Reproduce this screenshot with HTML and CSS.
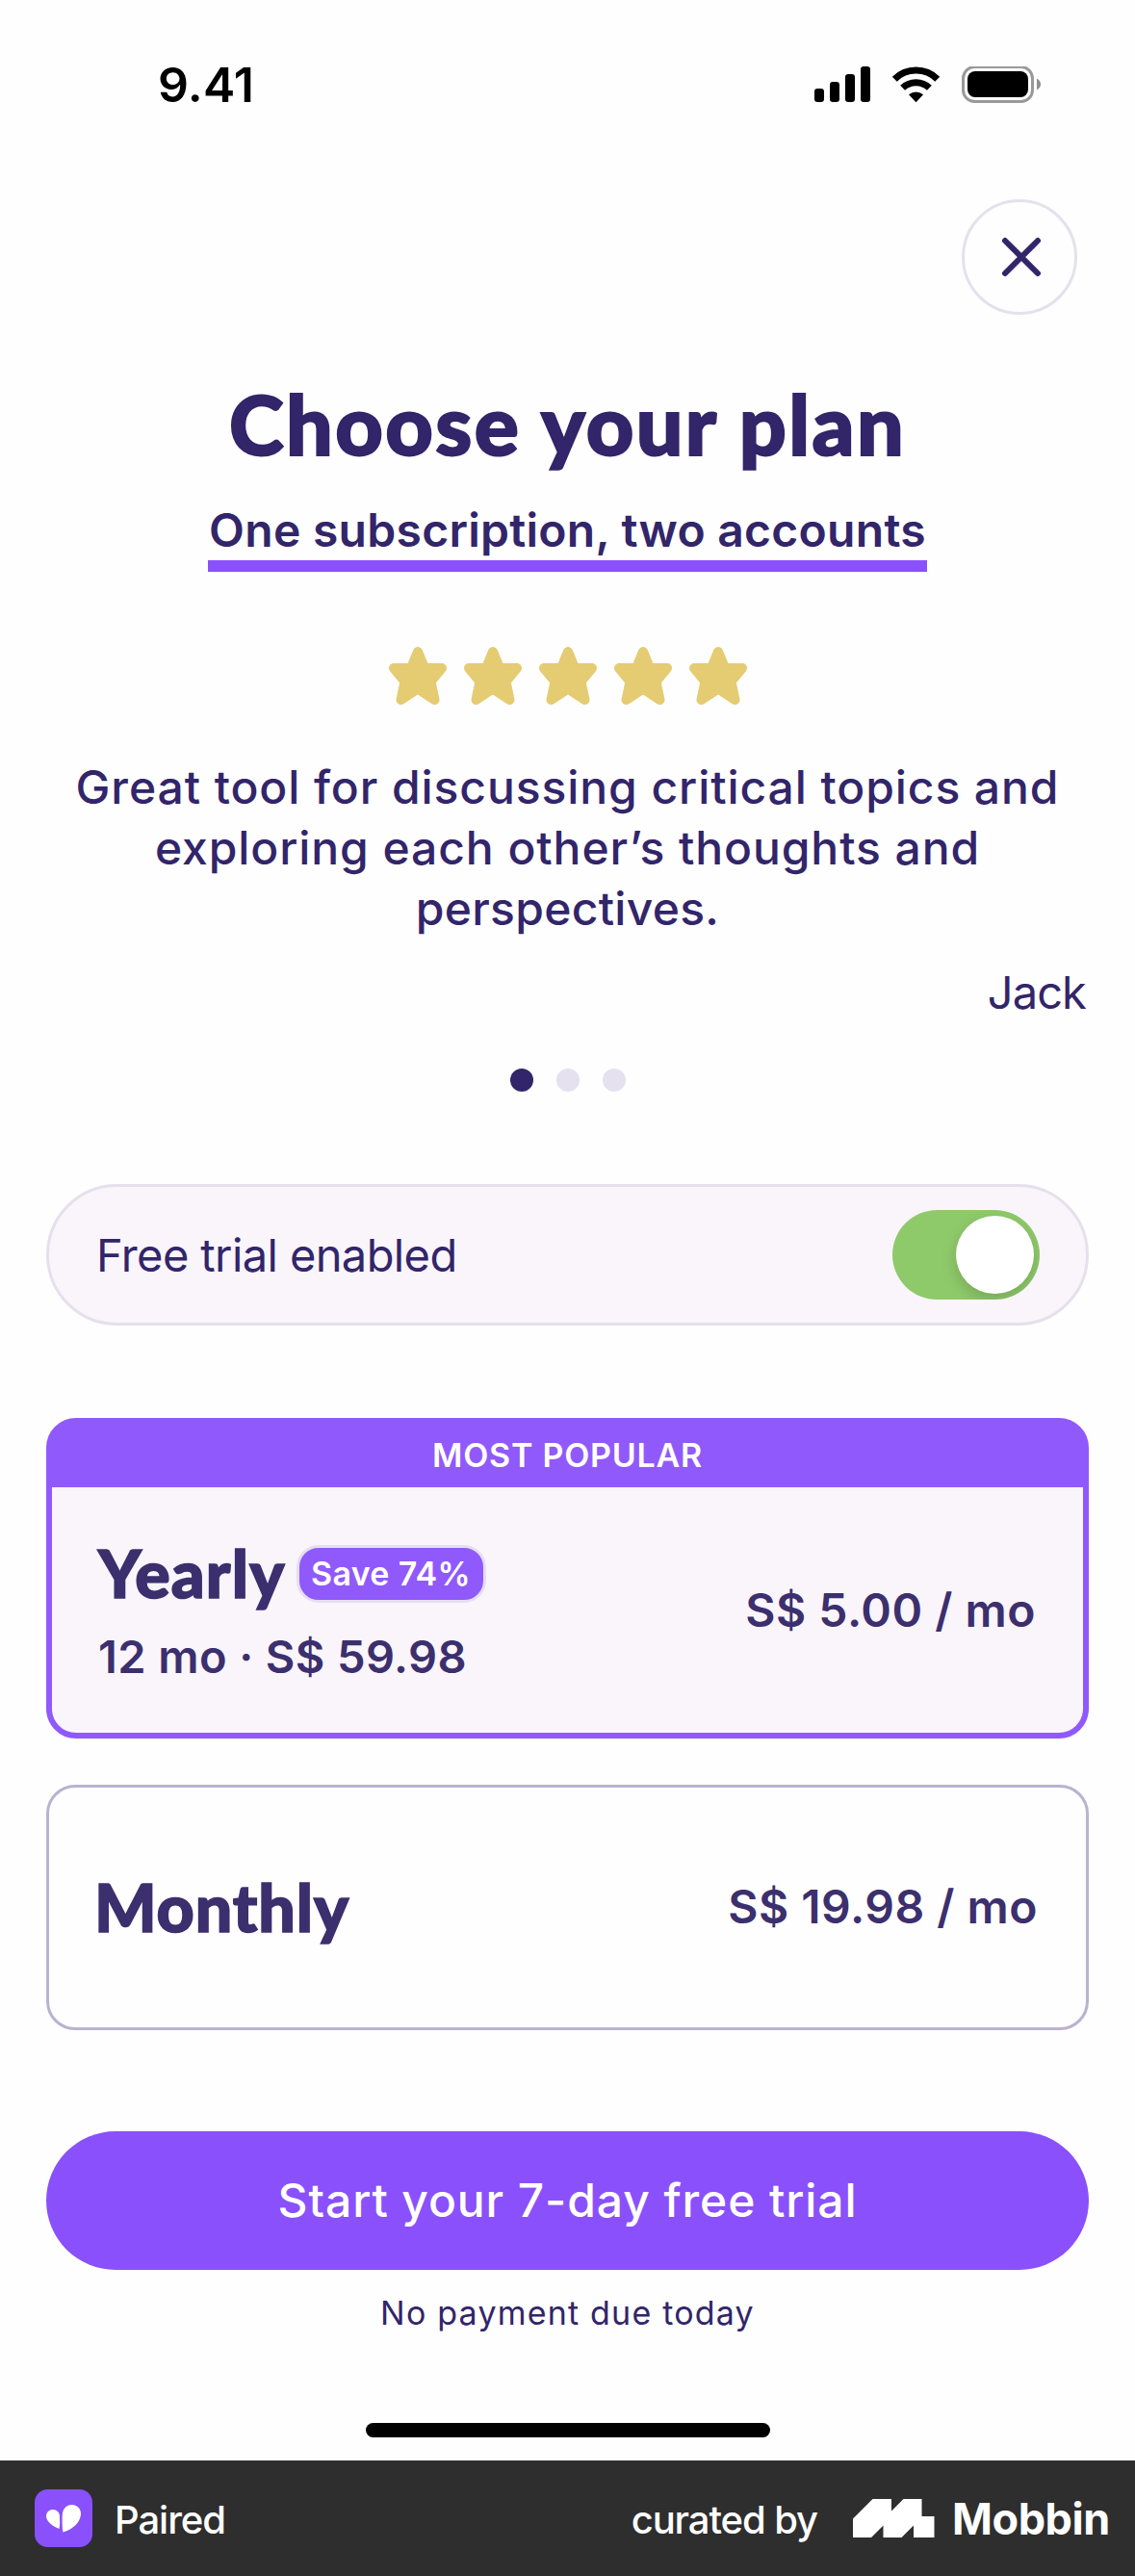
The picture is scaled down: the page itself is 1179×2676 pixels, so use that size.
FILE: index.html
```html
<!DOCTYPE html>
<html lang="en">
<head>
<meta charset="utf-8">
<title>Choose your plan</title>
<link rel="stylesheet" href="styles.css">
</head>
<body>
<div class="screen">
  <header class="status">
    <span class="time">9.41</span>
    <svg class="status-icons" width="236" height="40" viewBox="0 0 236 40">
      <rect x="0" y="23" width="10" height="14" rx="3.2"/>
      <rect x="16" y="16" width="10" height="21" rx="3.2"/>
      <rect x="32" y="8" width="10" height="29" rx="3.2"/>
      <rect x="48" y="0" width="10" height="37" rx="3.2"/>
      <g fill="none" stroke="#000" stroke-width="7">
        <path d="M83.3 13.2a31.5 31.5 0 0 1 44.4 0"/>
        <path d="M91.6 22.3a20 20 0 0 1 27.8 0"/>
      </g>
      <path d="M98 29.2a11.5 11.5 0 0 1 15 0L105.500 37.200Z"/>
      <rect x="154.500" y="0.500" width="72" height="36" rx="12" fill="none" stroke="#999" stroke-width="3"/>
      <rect x="159" y="5" width="63" height="27" rx="8"/>
      <path d="M231 12.500Q235 15 235 18.500Q235 22 231 24.500Z" fill="#8f8f8f"/>
    </svg>
  </header>

  <main class="content">
    <button class="close" aria-label="Close">
      <svg width="42" height="42" viewBox="0 0 42 42"><path d="M4 4L38 38M38 4L4 38"/></svg>
    </button>

    <h1 class="title">Choose your plan</h1>
    <p class="subtitle">One subscription, two accounts</p>

    <div class="stars">
      <svg class="star" viewBox="0 0 60 60"><path d="M30 5L37 22H55L43.500 36L47.500 55L30 43.500L12.500 55L16.500 36L5 22H23Z"/></svg>
      <svg class="star" viewBox="0 0 60 60"><path d="M30 5L37 22H55L43.500 36L47.500 55L30 43.500L12.500 55L16.500 36L5 22H23Z"/></svg>
      <svg class="star" viewBox="0 0 60 60"><path d="M30 5L37 22H55L43.500 36L47.500 55L30 43.500L12.500 55L16.500 36L5 22H23Z"/></svg>
      <svg class="star" viewBox="0 0 60 60"><path d="M30 5L37 22H55L43.500 36L47.500 55L30 43.500L12.500 55L16.500 36L5 22H23Z"/></svg>
      <svg class="star" viewBox="0 0 60 60"><path d="M30 5L37 22H55L43.500 36L47.500 55L30 43.500L12.500 55L16.500 36L5 22H23Z"/></svg>
    </div>

    <p class="quote">Great tool for discussing critical topics and<br>exploring each other’s thoughts and<br><span class="quote-end">perspectives.</span></p>
    <p class="author">Jack</p>
    <div class="dots"><i class="dot on"></i><i class="dot"></i><i class="dot"></i></div>

    <div class="trial">
      <span class="trial-label">Free trial enabled</span>
      <span class="switch"><i class="knob"></i></span>
    </div>

    <section class="plan yearly">
      <div class="plan-flag">MOST POPULAR</div>
      <div class="plan-body">
        <div>
          <div class="plan-head"><h2 class="plan-name">Yearly</h2><span class="badge">Save 74%</span></div>
          <p class="plan-note">12 mo · S$ 59.98</p>
        </div>
        <span class="price">S$ 5.00 / mo</span>
      </div>
    </section>

    <section class="plan monthly">
      <h2 class="plan-name">Monthly</h2>
      <span class="price">S$ 19.98 / mo</span>
    </section>

    <button class="cta">Start your 7-day free trial</button>
    <p class="caption">No payment due today</p>
    <div class="home-bar"></div>
  </main>

  <footer class="footer">
    <svg class="app-icon" width="60" height="60" viewBox="0 0 60 60">
      <rect width="60" height="60" rx="13.500" fill="#8a50fb"/>
      <path d="M25.500 41C18 38 12 33 12 28C12 23.500 15.500 21 19 21C23 21 26 24 26 28C26 33 26.500 37 25.500 41Z" fill="#fff"/>
      <path d="M29.300 44.500C28.500 39 28.500 32 28.700 27C29 20 33 16 38.500 16C44 16 48 20 48 25.500C48 33 40 42 29.300 44.500Z" fill="#fff"/>
    </svg>
    <span class="app-name">Paired</span>
    <span class="curated">curated by</span>
    <svg class="mobbin-mark" width="85" height="40" viewBox="0 0 85 40"><path d="M0 20.500L20.500 0H40V12.500L52.500 0H71.500V18H84.500V40H63V27.500L50.500 40H31.500V27.500L19 40H0Z" fill="#fff"/></svg>
    <span class="mobbin">Mobbin</span>
  </footer>
</div>
</body>
</html>
```
FILE: styles.css
```css
* { box-sizing: border-box; }
body { margin: 0; background: #fefefe; font-family: Inter, "Liberation Sans", sans-serif; color: #32256a; }
h1, h2, p { margin: 0; }
button { font: inherit; padding: 0; border: 0; }
svg { display: block; flex: none; }

.screen { width: 1179px; height: 2676px; display: flex; flex-direction: column; }
.status { height: 175px; display: flex; align-items: center; justify-content: space-between; padding: 0 97px 0 164px; color: #000; }
.time { font-size: 50px; font-weight: 600; letter-spacing: 0.2px; }
.status-icons { margin-top: 3px; }

.content { flex: 1; display: flex; flex-direction: column; align-items: center; padding: 32px 48px 0; }
.close { align-self: flex-end; margin-right: 12px; width: 120px; height: 120px; border: 3px solid #e4e1ec; border-radius: 50%; background: #fefefe; display: flex; align-items: center; justify-content: center; padding-left: 3px; }
.close path { fill: none; stroke: #32256a; stroke-width: 6; stroke-linecap: round; }

.title { margin-top: 63px; font: 900 86px/100px Lato, sans-serif; letter-spacing: 2.4px; -webkit-text-stroke: 2px #32256a; }
.subtitle { margin-top: 31px; width: 747px; text-align: center; font-size: 48px; font-weight: 600; line-height: 60px; letter-spacing: 0.28px; padding-bottom: 1px; border-bottom: 12px solid #8a50fb; white-space: nowrap; }

.stars { margin-top: 78px; display: flex; gap: 18px; }
.star { width: 60px; height: 60px; }
.star path { fill: #e5cb71; stroke: #e5cb71; stroke-width: 10; stroke-linejoin: round; }

.quote { margin-top: 54px; font-size: 48px; font-weight: 500; line-height: 63px; letter-spacing: 0.92px; text-align: center; white-space: nowrap; }
.quote-end { letter-spacing: 0.3px; }
.author { align-self: flex-end; margin-top: 26px; margin-right: 3px; font-size: 47px; line-height: 60px; letter-spacing: -0.9px; }
.dots { margin-top: 49px; display: flex; gap: 24px; }
.dot { width: 24px; height: 24px; border-radius: 50%; background: #e5e1ee; }
.dot.on { background: #32256a; }

.trial { margin-top: 96px; width: 100%; height: 147px; border: 3px solid #e4e1ec; border-radius: 74px; background: #f9f5fb; display: flex; align-items: center; justify-content: space-between; padding: 0 48px 0 49px; }
.trial-label { font-size: 47px; letter-spacing: -0.6px; }
.switch { width: 153px; height: 93px; border-radius: 47px; background: #8fca6a; display: flex; align-items: center; justify-content: flex-end; padding-right: 6px; overflow: hidden; }
.knob { width: 81px; height: 81px; border-radius: 50%; background: #fff; box-shadow: 0 6px 16px rgba(0, 0, 0, 0.17); }

.plan { width: 100%; color: #3c2f6e; }
.plan-name { font: 900 68px/80px Lato, sans-serif; -webkit-text-stroke: 1.6px #3c2f6e; }
.price { font-size: 48px; font-weight: 600; letter-spacing: 0.5px; }
.yearly { margin-top: 96px; height: 333px; border: 6px solid #9059fc; border-radius: 31px; background: #f9f5fb; display: flex; flex-direction: column; }
.plan-flag { flex: none; height: 67px; margin: -1px -1px 0; border-radius: 22px 22px 0 0; background: #9059fc; color: #fff; text-align: center; font-size: 34px; font-weight: 600; line-height: 68px; letter-spacing: 0.75px; }
.plan-body { flex: 1; display: flex; justify-content: space-between; align-items: center; padding: 0 49px 0 48px; }
.plan-head { display: flex; align-items: center; gap: 11px; }
.yearly .plan-name { letter-spacing: 1.2px; }
.badge { width: 197px; height: 60px; margin-top: 2px; border: 3px solid #e5def2; border-radius: 23px; background: #9059fc; color: #fff; text-align: center; font-size: 34px; font-weight: 600; line-height: 53px; letter-spacing: 0.3px; }
.plan-note { margin-top: 17px; font-size: 47px; font-weight: 600; line-height: 60px; letter-spacing: 0.4px; }
.monthly { margin-top: 48px; height: 255px; border: 3px solid #b9b3d0; border-radius: 30px; display: flex; align-items: center; justify-content: space-between; padding: 0 50px 2px 47px; }
.monthly .plan-name { letter-spacing: 0.9px; }

.cta { margin-top: 105px; width: 100%; height: 144px; padding-bottom: 2px; border-radius: 72px; background: #8a50fb; color: #fff; font-size: 48px; font-weight: 500; letter-spacing: 0.9px; }
.caption { margin-top: 25px; font-size: 34px; line-height: 40px; letter-spacing: 1.2px; }
.home-bar { margin-top: 94px; width: 420px; height: 15px; border-radius: 8px; background: #000; }

.footer { height: 120px; background: #2e2e2e; color: #fff; display: flex; align-items: center; padding: 0 26px 0 36px; font-size: 40px; font-weight: 500; }
.app-name { margin: 3px 0 0 23px; letter-spacing: -1.04px; }
.curated { margin: 3px 0 0 auto; letter-spacing: -1.1px; }
.mobbin-mark { margin-left: 37px; }
.mobbin { margin-left: 18px; font-size: 45px; font-weight: 700; letter-spacing: -0.4px; }
```
